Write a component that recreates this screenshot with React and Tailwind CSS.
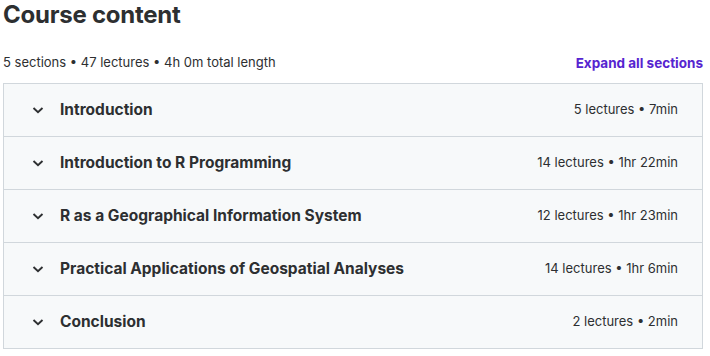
import React from "react";

const sections = [
  ["Introduction", "5 lectures • 7min"],
  ["Introduction to R Programming", "14 lectures • 1hr 22min"],
  ["R as a Geographical Information System", "12 lectures • 1hr 23min"],
  ["Practical Applications of Geospatial Analyses", "14 lectures • 1hr 6min"],
  ["Conclusion", "2 lectures • 2min"],
];

function Chevron() {
  return (
    <svg width="12" height="12" viewBox="0 0 12 12" className="shrink-0">
      <path d="M1.5 4 L6 8.2 L10.5 4" fill="none" stroke="#2d2f31" strokeWidth="1.9" />
    </svg>
  );
}

export default function App() {
  return (
    <div className="w-[710px] h-[356px] bg-white text-[#2d2f31] pl-[3px] pr-[7px]" style={{ fontFamily: "Inter, 'Noto Sans', sans-serif" }}>
      <h2 className="text-[24px] font-bold leading-[29px] tracking-[-0.01em]">Course content</h2>
      <div className="flex items-center justify-between mt-[26px] h-[16px]">
        <span className="text-[13px]">5 sections • 47 lectures • 4h 0m total length</span>
        <span className="text-[13.5px] font-bold text-[#5624d0]">Expand all sections</span>
      </div>
      <div className="mt-[12px] border border-[#d1d7dc] bg-[#f7f9fa]">
        {sections.map(([t, m], i) => (
          <div key={i} className={"flex items-center h-[52px] pl-[28px] pr-[24px] " + (i > 0 ? "border-t border-[#d1d7dc] h-[53px]" : "")}>
            <Chevron />
            <span className="ml-[16px] font-bold text-[15.5px] flex-1">{t}</span>
            <span className="text-[13px]">{m}</span>
          </div>
        ))}
      </div>
    </div>
  );
}
